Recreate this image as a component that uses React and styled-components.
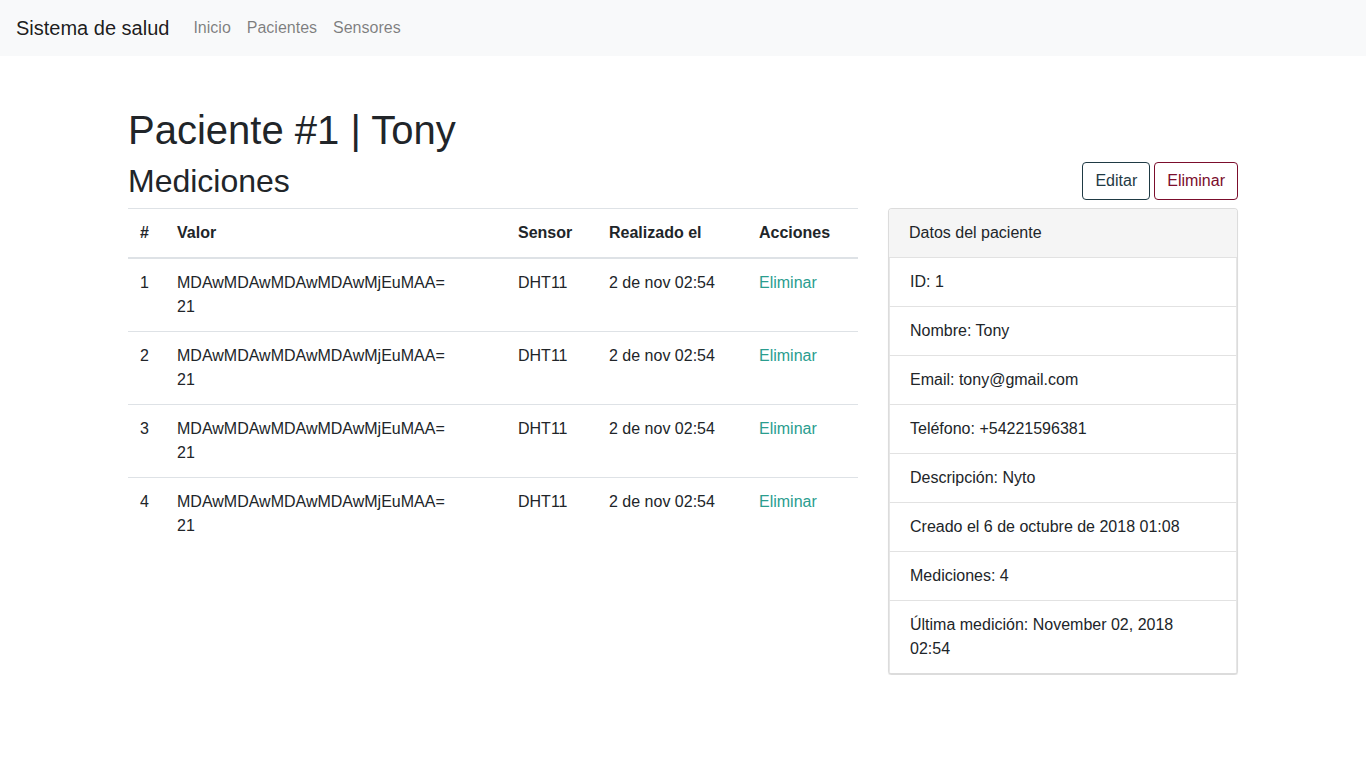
import React from "react";
import styled, { createGlobalStyle } from "styled-components";

const GlobalStyle = createGlobalStyle`
  * { box-sizing: border-box; }
  body {
    margin: 0;
    font-family: "Liberation Sans", Arial, sans-serif;
    font-size: 16px;
    line-height: 1.5;
    color: #212529;
    background: #fff;
  }
`;

const Nav = styled.nav`
  display: flex;
  align-items: center;
  height: 56px;
  padding: 0 16px;
  background: #f8f9fa;
`;

const Brand = styled.a`
  font-size: 20px;
  line-height: 30px;
  color: rgba(0, 0, 0, 0.9);
  margin-right: 16px;
  text-decoration: none;
`;

const NavLink = styled.a`
  padding: 8px;
  color: rgba(0, 0, 0, 0.5);
  text-decoration: none;
`;

const Container = styled.div`
  width: 1140px;
  margin: 0 auto;
  padding: 50px 15px 0;
`;

const Title = styled.h1`
  margin: 0 0 8px;
  font-size: 40px;
  font-weight: 500;
  line-height: 1.2;
`;

const Row = styled.div`
  display: grid;
  grid-template-columns: 730px 350px;
  column-gap: 30px;
`;

const SubTitle = styled.h2`
  margin: 0 0 8px;
  font-size: 32px;
  font-weight: 500;
  line-height: 1.2;
`;

const Table = styled.table`
  width: 100%;
  border-collapse: collapse;
  table-layout: fixed;
`;

const Th = styled.th`
  width: ${(p) => p.w}px;
  padding: 12px;
  text-align: left;
  font-weight: 700;
  vertical-align: bottom;
  border-top: 1px solid #dee2e6;
  border-bottom: 2px solid #dee2e6;
`;

const Td = styled.td`
  padding: 12px;
  vertical-align: top;
  border-top: 1px solid #dee2e6;
`;

const Link = styled.a`
  color: #2a9d8f;
  text-decoration: none;
`;

const Actions = styled.div`
  display: flex;
  justify-content: flex-end;
  gap: 4px;
  margin-bottom: 8px;
`;

const Button = styled.button`
  font-family: inherit;
  font-size: 16px;
  line-height: 24px;
  padding: 6px 12px;
  background: #fff;
  border: 1px solid ${(p) => p.tone};
  color: ${(p) => p.tone};
  border-radius: 4px;
`;

const Card = styled.div`
  border: 1px solid #dcdcdc;
  border-bottom-width: 2px;
  border-radius: 4px;
  box-shadow: 0 1px 1px rgba(0, 0, 0, 0.08);
  overflow: hidden;
`;

const CardHeader = styled.div`
  padding: 12px 20px;
  background: #f5f5f5;
  border-bottom: 1px solid #e2e2e2;
`;

const Item = styled.div`
  padding: 12px 20px;
  border-bottom: 1px solid #e2e2e2;
  border-left: 1px solid #e6e6e6;
  border-right: 1px solid #e6e6e6;
  &:last-child {
    border-bottom: none;
  }
`;

const mediciones = [1, 2, 3, 4].map((id) => ({
  id,
  valor: "MDAwMDAwMDAwMDAwMjEuMAA=",
  extra: "21",
  sensor: "DHT11",
  fecha: "2 de nov 02:54",
}));

const datos = [
  "ID: 1",
  "Nombre: Tony",
  "Email: tony@gmail.com",
  "Teléfono: +54221596381",
  "Descripción: Nyto",
  "Creado el 6 de octubre de 2018 01:08",
  "Mediciones: 4",
  "Última medición: November 02, 2018 02:54",
];

export default function App() {
  return (
    <>
      <GlobalStyle />
      <Nav>
        <Brand href="#">Sistema de salud</Brand>
        <NavLink href="#">Inicio</NavLink>
        <NavLink href="#">Pacientes</NavLink>
        <NavLink href="#">Sensores</NavLink>
      </Nav>
      <Container>
        <Title>Paciente #1 | Tony</Title>
        <Row>
          <div>
            <SubTitle>Mediciones</SubTitle>
            <Table>
              <thead>
                <tr>
                  <Th w={37}>#</Th>
                  <Th w={341}>Valor</Th>
                  <Th w={91}>Sensor</Th>
                  <Th w={150}>Realizado el</Th>
                  <Th w={111}>Acciones</Th>
                </tr>
              </thead>
              <tbody>
                {mediciones.map((m) => (
                  <tr key={m.id}>
                    <Td>{m.id}</Td>
                    <Td>
                      {m.valor}
                      <br />
                      {m.extra}
                    </Td>
                    <Td>{m.sensor}</Td>
                    <Td>{m.fecha}</Td>
                    <Td>
                      <Link href="#">Eliminar</Link>
                    </Td>
                  </tr>
                ))}
              </tbody>
            </Table>
          </div>
          <div>
            <Actions>
              <Button tone="#1f3a44">Editar</Button>
              <Button tone="#7b0d2c">Eliminar</Button>
            </Actions>
            <Card>
              <CardHeader>Datos del paciente</CardHeader>
              {datos.map((d) => (
                <Item key={d}>{d}</Item>
              ))}
            </Card>
          </div>
        </Row>
      </Container>
    </>
  );
}
